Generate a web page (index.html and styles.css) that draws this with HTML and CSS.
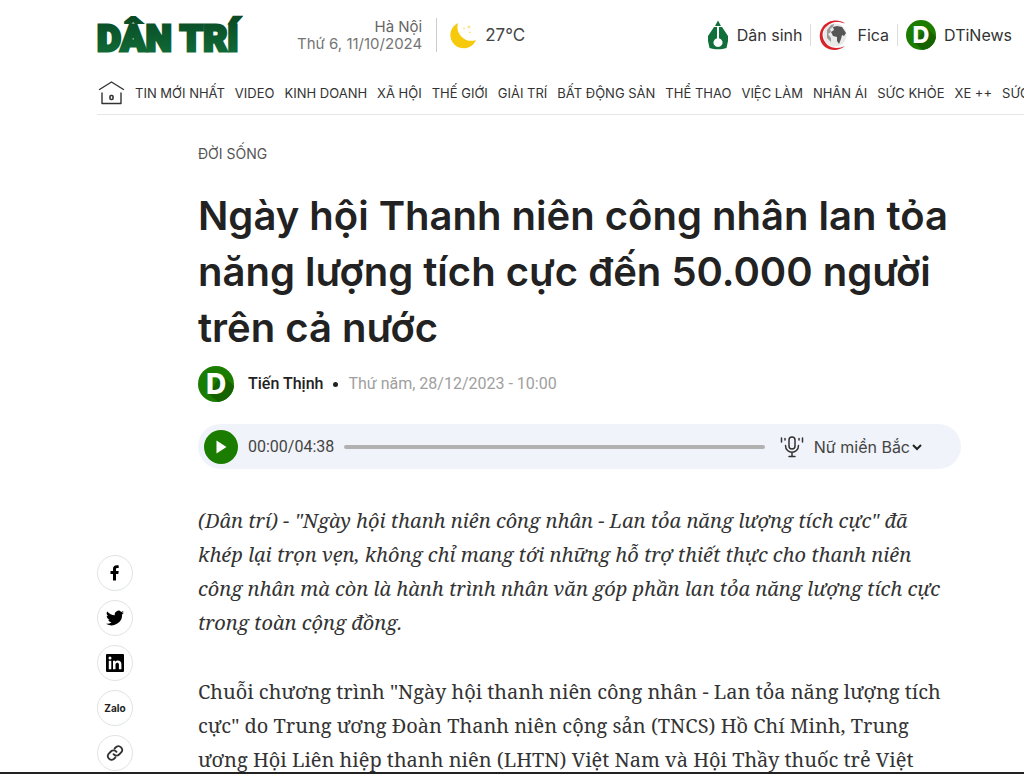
FILE: index.html
```html
<!DOCTYPE html>
<html lang="vi">
<head>
<meta charset="utf-8">
<meta name="viewport" content="width=device-width, initial-scale=1">
<title>Ngày hội Thanh niên công nhân lan tỏa năng lượng tích cực</title>
<link rel="stylesheet" href="styles.css">
</head>
<body>
<div class="page">
  <header class="header">
    <div class="topbar">
      <a class="logo" href="#">
        <svg width="146" height="56" viewBox="0 0 146 56">
          <defs><linearGradient id="brand" x1="0" y1="0" x2="0" y2="1"><stop offset="0" stop-color="#0a4a24"/><stop offset="1" stop-color="#11703a"/></linearGradient></defs>
          <text x="0" y="44" fill="url(#brand)" stroke="url(#brand)" stroke-width="3">DÂN TRÍ</text>
        </svg>
      </a>
      <div class="place"><span>Hà Nội</span><span>Thứ 6, 11/10/2024</span></div>
      <div class="weather">
        <svg width="28" height="28" viewBox="0 0 28 28" aria-hidden="true"><path d="M8 2A13.300 13.300 0 1 0 26 19A14 14 0 0 1 8 2Z" fill="#f6c90a"/><path d="M19 4l.6 1.400L21 6l-1.400.6L19 8l-.6-1.400L17 6l1.400-.6zM14 6l.4 1 .9.300-.9.400-.4 1-.4-1-1-.4 1-.3zM20 10l.4 1 1 .4-1 .4-.4 1-.4-1-1-.4 1-.4z" fill="#f9d95a"/></svg>
        <span>27°C</span>
      </div>
      <nav class="partners" aria-label="Trang liên kết">
        <a href="#">
          <svg width="22" height="30" viewBox="0 0 22 30" aria-hidden="true"><path d="M11 .5 14 6H8zM7 7h3v11.200a4.500 4.500 0 1 0 2 0V7h3L21 16v5l-1.500 7c-5 1.800-12 1.800-17 0L1 21v-5z" fill="#11703a"/></svg>
          <span>Dân sinh</span></a>
        <a href="#">
          <svg width="30" height="30" viewBox="0 0 30 30" aria-hidden="true"><circle cx="16" cy="15" r="11.500" fill="#e9e9e9"/><path d="M14 7l4-1 5 1 4 6-2 3-2-1-1 4-2 5-2-3 0-4-4-1-2-4 3-2z" fill="#555"/><path d="M8 10l4-5 3-1-1 3-3 2 1 3-3 2 3 4 0 4-4-4z" fill="#999"/><path d="M26 3.500C19-1.500 9 .2 4 6.500-1 13-.2 22 6 27c6 4 14 4 20-1-6 3-13 2.500-17.500-1C3 20 2 13 6 8 11 1.500 19 .5 26 3.500z" fill="#d8232a"/></svg>
          <span>Fica</span></a>
        <a href="#">
          <svg width="30" height="30" viewBox="0 0 36 36" aria-hidden="true"><circle cx="18" cy="18" r="18" fill="#1b7d00"/><path d="M24 9 36 20A18 18 0 0 1 20 36L10 27z" fill="#146200"/><text class="mark" x="18" y="28">D</text></svg>
          <span>DTiNews</span></a>
      </nav>
    </div>
    <nav class="menu" aria-label="Chuyên mục">
      <a class="home" href="#" aria-label="Trang chủ"><svg width="27" height="25" viewBox="0 0 27 25" fill="none" stroke="#333" stroke-width="1.400" stroke-linecap="round" stroke-linejoin="round" aria-hidden="true"><path d="M1.500 9.500 13.500 2l12 7.500M4 13v10.500h19V13"/><rect x="12" y="15.500" width="3" height="4" rx="1" stroke-width="1.600"/></svg></a>
      <a href="#">TIN MỚI NHẤT</a><a href="#">VIDEO</a><a href="#">KINH DOANH</a><a href="#">XÃ HỘI</a><a href="#">THẾ GIỚI</a><a href="#">GIẢI TRÍ</a><a href="#">BẤT ĐỘNG SẢN</a><a href="#">THỂ THAO</a><a href="#">VIỆC LÀM</a><a href="#">NHÂN ÁI</a><a href="#">SỨC KHỎE</a><a href="#">XE ++</a><a href="#">SỨC MẠNH SỐ</a>
    </nav>
  </header>
  <main class="content">
    <aside class="share" aria-label="Chia sẻ">
      <button type="button" aria-label="Facebook"><svg width="18" height="18" viewBox="0 0 18 18" aria-hidden="true"><path d="M7 16.500V10H4.500V7H7V5c0-2.500 1.500-3.700 3.700-3.700.9 0 1.700.1 2 .1V4h-1.400C10.200 4 10 4.600 10 5.300V7h2.700l-.4 3H10v6.500z"/></svg></button>
      <button type="button" aria-label="Twitter"><svg width="18" height="18" viewBox="0 0 24 24" aria-hidden="true"><path d="M24 4.600a10 10 0 0 1-2.800.8 4.900 4.900 0 0 0 2.100-2.700 10 10 0 0 1-3.100 1.200 4.900 4.900 0 0 0-8.400 4.500A14 14 0 0 1 1.700 3.200a4.900 4.900 0 0 0 1.500 6.500 4.900 4.900 0 0 1-2.200-.6 4.900 4.900 0 0 0 3.900 4.900 4.900 4.900 0 0 1-2.200.1 4.900 4.900 0 0 0 4.600 3.400A9.900 9.900 0 0 1 0 19.500 14 14 0 0 0 21.500 7.100 10 10 0 0 0 24 4.600z"/></svg></button>
      <button type="button" aria-label="LinkedIn"><svg width="18" height="18" viewBox="0 0 18 18" aria-hidden="true"><rect width="18" height="18" rx="1"/><g fill="#fff"><circle cx="4" cy="4" r="1.500"/><path d="M2.800 6.800h2.500v8.500H2.800zM7 6.800h2.400V8c1.400-2.300 6-1.900 6 2.300v5h-2.500v-4.500c0-2.900-3.400-2.600-3.400 0v4.500H7z"/></g></svg></button>
      <button type="button" class="zalo">Zalo</button>
      <button type="button" aria-label="Sao chép liên kết"><svg width="18" height="18" viewBox="0 0 24 24" fill="none" stroke="#333" stroke-width="2.400" stroke-linecap="round" aria-hidden="true"><path d="M10 13.500a5 5 0 0 0 7.500.5l3-3a5 5 0 0 0-7-7L11.500 6M14 10.500a5 5 0 0 0-7.500-.5l-3 3a5 5 0 0 0 7 7l2-2"/></svg></button>
    </aside>
    <article class="article">
      <a class="category" href="#">ĐỜI SỐNG</a>
      <h1>Ngày hội Thanh niên công nhân lan tỏa năng lượng tích cực đến 50.000 người trên cả nước</h1>
      <div class="byline">
        <svg width="36" height="36" viewBox="0 0 36 36" aria-hidden="true"><circle cx="18" cy="18" r="18" fill="#1b7d00"/><path d="M24 9 36 20A18 18 0 0 1 20 36L10 27z" fill="#146200"/><text class="mark" x="18" y="28">D</text></svg>
        <a class="author" href="#">Tiến Thịnh</a><span class="dot"></span><time datetime="2023-12-28T10:00">Thứ năm, 28/12/2023 - 10:00</time>
      </div>
      <div class="player">
        <button class="play" type="button" aria-label="Phát"><svg width="34" height="34" viewBox="0 0 34 34" aria-hidden="true"><path d="M12.500 10.500v13l10-6.500z" fill="#fff"/></svg></button>
        <span class="clock">00:00/04:38</span>
        <input class="track" type="range" min="0" max="278" value="0" aria-label="Vị trí phát">
        <label class="voice">
          <svg width="24" height="22" viewBox="0 0 24 22" fill="none" stroke="#333" stroke-width="1.500" stroke-linecap="round" aria-label="Giọng đọc"><rect x="9" y="1" width="6" height="12" rx="3"/><path d="M5.500 9.500c0 9 13 9 13 0M12 16.500V20M9 20.500h6M1.500 2v4M5 2.500v1.500M19 2.500v1.500M22.500 2v4"/></svg>
          <select><option>Nữ miền Bắc</option><option>Nam miền Bắc</option></select>
          <svg class="chevron" width="10" height="8" viewBox="0 0 10 8" fill="none" stroke="#222" stroke-width="2" aria-hidden="true"><path d="M1 2l4 4 4-4"/></svg>
        </label>
      </div>
      <p class="lead">(Dân trí) - "Ngày hội thanh niên công nhân - Lan tỏa năng lượng tích cực" đã<br>khép lại trọn vẹn, không chỉ mang tới những hỗ trợ thiết thực cho thanh niên<br>công nhân mà còn là hành trình nhân văn góp phần lan tỏa năng lượng tích cực<br>trong toàn cộng đồng.</p>
      <p>Chuỗi chương trình "Ngày hội thanh niên công nhân - Lan tỏa năng lượng tích<br>cực" do Trung ương Đoàn Thanh niên cộng sản (TNCS) Hồ Chí Minh, Trung<br>ương Hội Liên hiệp thanh niên (LHTN) Việt Nam và Hội Thầy thuốc trẻ Việt</p>
    </article>
  </main>
</div>
<div class="edge"></div>
</body>
</html>
```
FILE: styles.css
```css
* { box-sizing: border-box; }
body {
  margin: 0;
  background: #fff;
  color: #222;
  font-family: Inter, "Noto Sans", sans-serif;
}
a { color: inherit; text-decoration: none; }
svg { display: block; flex: none; }
.page { padding-left: 97px; height: 100vh; overflow: hidden; }
.topbar { display: flex; align-items: center; height: 70px; padding-right: 12px; }
.logo { flex: none; }
.logo text { font: 900 37px Roboto, sans-serif; }
.place {
  display: flex;
  flex-direction: column;
  align-items: flex-end;
  margin-left: 54px;
  padding-right: 14px;
  border-right: 1px solid #ccc;
  font-size: 15px;
  line-height: 17px;
  color: #757575;
  white-space: nowrap;
}
.place span:first-child { color: #666; }
.weather { display: flex; align-items: center; gap: 7px; margin-left: 13px; font-size: 17px; color: #444; }
.partners { display: flex; align-items: center; margin-left: auto; font-size: 16px; color: #333; white-space: nowrap; }
.partners a { display: flex; align-items: center; gap: 8px; }
.partners a + a { margin-left: 8px; padding-left: 9px; background: linear-gradient(#ddd, #ddd) left center / 1px 22px no-repeat; }
.menu {
  display: flex;
  align-items: center;
  gap: 10px;
  height: 45px;
  padding: 1px 0 0 1px;
  border-bottom: 1px solid #e6e6e6;
  font-size: 13px;
  color: #333;
  white-space: nowrap;
  overflow: hidden;
}
.content { display: grid; grid-template-columns: 36px minmax(0, 763px); column-gap: 65px; }
.share { display: flex; flex-direction: column; gap: 9px; padding-top: 440px; }
.share button {
  display: flex;
  align-items: center;
  justify-content: center;
  width: 36px;
  height: 36px;
  padding: 0;
  border: 1px solid #dfe3e3;
  border-radius: 50%;
  background: #fff;
}
.share .zalo { font: 700 10px Inter, sans-serif; color: #222; }
.article { padding-top: 30px; }
.category { display: block; font-size: 14px; line-height: 18px; color: #555; }
h1 { margin: 25px 0 10px; font-size: 40px; font-weight: 600; line-height: 56px; }
.byline { display: flex; align-items: center; font: 16px/20px Roboto, sans-serif; color: #a0a0a0; }
.mark { font: 800 28px Inter, sans-serif; fill: #fff; text-anchor: middle; }
.author { margin-left: 14px; font-weight: 500; color: #222; }
.dot { width: 5px; height: 5px; margin: 0 10px; border-radius: 50%; background: #222; }
.player {
  display: flex;
  align-items: center;
  height: 45px;
  margin-top: 22px;
  padding: 0 39px 0 6px;
  border-radius: 23px;
  background: #f0f3f9;
  color: #444;
}
.play { padding: 0; border: 0; border-radius: 50%; background: #1b7d00; }
.clock { margin: 0 10px; font: 16px/20px Roboto, sans-serif; }
.track { flex: 1; min-width: 0; height: 4px; margin: 0; border-radius: 2px; background: #b1b1b1; appearance: none; }
.track::-webkit-slider-thumb { appearance: none; width: 0; height: 0; }
.voice { display: flex; align-items: center; margin-left: 15px; }
.voice select { margin: 0 2px 0 10px; padding: 0; border: 0; background: none; font: 16px/20px Inter, sans-serif; color: #444; appearance: none; field-sizing: content; }
.article p {
  margin: 35px 0 0;
  font: 20px/34px "Noto Serif", "Liberation Serif", serif;
  color: #333;
  white-space: nowrap;
}
.article .lead { font-style: italic; }
.edge { position: fixed; left: 0; right: 0; bottom: 0; height: 2px; background: #222; }
```
